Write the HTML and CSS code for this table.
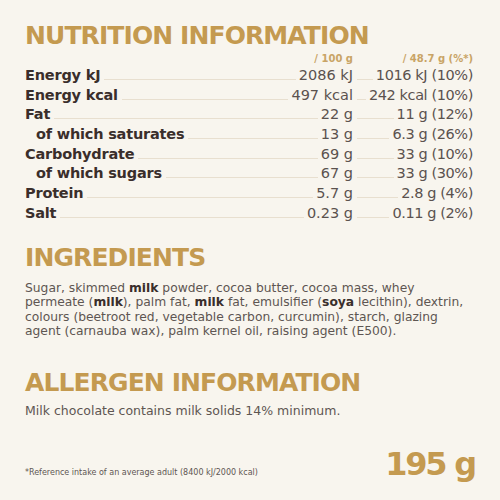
FILE: index.html
```html
<!DOCTYPE html>
<html>
<head>
<meta charset="utf-8">
<link rel="stylesheet" href="styles.css">
</head>
<body>
<main class="page">
  <h1 class="title">NUTRITION INFORMATION</h1>
  <div class="table">
    <div class="row head">
      <div class="c1"><span class="v">/ 100 g</span></div>
      <div class="c2"><span class="v">/ 48.7 g (%*)</span></div>
    </div>
    <div class="row">
      <div class="c1"><span class="lab">Energy kJ</span><i class="dots"></i><span class="v">2086 kJ</span></div>
      <div class="c2"><i class="dots"></i><span class="v">1016 kJ (10%)</span></div>
    </div>
    <div class="row">
      <div class="c1"><span class="lab">Energy kcal</span><i class="dots"></i><span class="v">497 kcal</span></div>
      <div class="c2"><i class="dots"></i><span class="v">242 kcal (10%)</span></div>
    </div>
    <div class="row">
      <div class="c1"><span class="lab">Fat</span><i class="dots"></i><span class="v">22 g</span></div>
      <div class="c2"><i class="dots"></i><span class="v">11 g (12%)</span></div>
    </div>
    <div class="row">
      <div class="c1"><span class="lab sub">of which saturates</span><i class="dots"></i><span class="v">13 g</span></div>
      <div class="c2"><i class="dots"></i><span class="v">6.3 g (26%)</span></div>
    </div>
    <div class="row">
      <div class="c1"><span class="lab">Carbohydrate</span><i class="dots"></i><span class="v">69 g</span></div>
      <div class="c2"><i class="dots"></i><span class="v">33 g (10%)</span></div>
    </div>
    <div class="row">
      <div class="c1"><span class="lab sub">of which sugars</span><i class="dots"></i><span class="v">67 g</span></div>
      <div class="c2"><i class="dots"></i><span class="v">33 g (30%)</span></div>
    </div>
    <div class="row">
      <div class="c1"><span class="lab">Protein</span><i class="dots"></i><span class="v">5.7 g</span></div>
      <div class="c2"><i class="dots"></i><span class="v">2.8 g (4%)</span></div>
    </div>
    <div class="row">
      <div class="c1"><span class="lab">Salt</span><i class="dots"></i><span class="v">0.23 g</span></div>
      <div class="c2"><i class="dots"></i><span class="v">0.11 g (2%)</span></div>
    </div>
  </div>

  <h2 class="title t2">INGREDIENTS</h2>
  <p class="text">Sugar, skimmed <b>milk</b> powder, cocoa butter, cocoa mass, whey permeate (<b>milk</b>), palm fat, <b>milk</b> fat, emulsifier (<b>soya</b> lecithin), dextrin, colours (beetroot red, vegetable carbon, curcumin), starch, glazing agent (carnauba wax), palm kernel oil, raising agent (E500).</p>

  <h2 class="title t3">ALLERGEN INFORMATION</h2>
  <p class="text allergen">Milk chocolate contains milk solids 14% minimum.</p>

  <footer class="foot">
    <span class="note">*Reference intake of an average adult (8400 kJ/2000 kcal)</span>
    <span class="weight">195 g</span>
  </footer>
</main>
</body>
</html>
```

FILE: styles.css
```css
html, body {
  margin: 0;
  padding: 0;
  background: #f8f5ee;
}
body {
  font-family: "DejaVu Sans", "Noto Sans", sans-serif;
  color: #3b302c;
}
.page {
  width: 500px;
  height: 500px;
  box-sizing: border-box;
  padding: 22px 25px 0 25px;
  display: flex;
  flex-direction: column;
}
.title {
  margin: 0;
  color: #c49a50;
  font-size: 25px;
  font-weight: 700;
  line-height: 28px;
  letter-spacing: -0.9px;
}
.table {
  display: flex;
  flex-direction: column;
  margin-top: 2px;
  margin-right: 2px;
}
.row {
  display: grid;
  grid-template-columns: 1fr 120px;
  height: 19.7px;
  align-items: center;
  font-size: 14.5px;
}
.row.head {
  height: 13px;
  font-size: 10px;
  font-weight: 700;
  color: #c9a466;
}
.c1, .c2 {
  display: flex;
  align-items: baseline;
  justify-content: flex-end;
}
.lab {
  font-weight: 700;
  color: #3a2e2b;
  white-space: nowrap;
  letter-spacing: -0.2px;
}
.lab.sub {
  padding-left: 11px;
}
.dots {
  flex: 1;
  height: 0;
  border-bottom: 1.5px solid #e8dfcf;
  margin: 0 3px 0 4px;
}
.v {
  color: #5b524e;
  white-space: nowrap;
}
.c2 .v {
  letter-spacing: -0.4px;
}
.head .v {
  color: #c9a466;
  letter-spacing: 0;
}
.t2 {
  margin-top: 21px;
}
.text {
  margin: 9px 0 0;
  font-size: 12.3px;
  line-height: 14.6px;
  color: #5e5652;
}
.text b {
  color: #3a2e2b;
  font-weight: 700;
}
.t3 {
  margin-top: 30px;
}
.allergen {
  margin-top: 7px;
  font-size: 12.5px;
}
.foot {
  margin-top: auto;
  margin-bottom: 16px;
  display: flex;
  justify-content: space-between;
  align-items: baseline;
}
.note {
  font-size: 8px;
  color: #5e5652;
}
.weight {
  font-size: 32px;
  font-weight: 700;
  color: #c49a50;
  line-height: 40px;
  letter-spacing: -2.2px;
}
```
